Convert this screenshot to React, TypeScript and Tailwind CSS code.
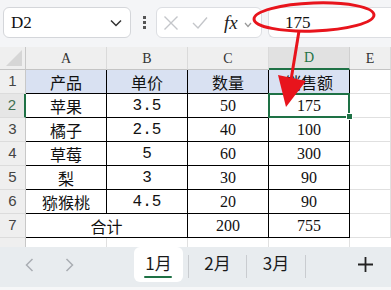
import React from "react";

const SERIF = "font-['Liberation_Serif','Noto_Sans_CJK_SC',serif]";
const CJK = "font-['Noto_Sans_CJK_SC',sans-serif]";
const MONO = "font-['Liberation_Mono',monospace]";

function Toolbar() {
  return (
    <div className="flex h-[47px] items-start bg-[#f4f5f7] pt-[7px]">
      <div className="ml-[3px] flex h-[31px] w-[128px] items-center justify-between rounded-[6px] border border-[#d4d6da] bg-white pl-[7px] pr-[8px]">
        <span className={`${SERIF} text-[17px] leading-none text-[#111]`}>D2</span>
        <svg width="12" height="8" viewBox="0 0 12 8">
          <path d="M1 1.5 L6 6.5 L11 1.5" fill="none" stroke="#333" strokeWidth="1.5" />
        </svg>
      </div>
      <div className="ml-[12px] mr-[10px] flex h-[31px] flex-col items-center justify-center gap-[2px]">
        <div className="h-[3px] w-[3px] bg-[#555]" />
        <div className="h-[3px] w-[3px] bg-[#555]" />
        <div className="h-[3px] w-[3px] bg-[#555]" />
      </div>
      <div className="flex h-[31px] w-[106px] items-center rounded-[6px] border border-[#dcdee2] bg-white pl-[6px]">
        <svg width="16" height="16" viewBox="0 0 16 16">
          <path d="M1.5 1.5 L14.5 14.5 M14.5 1.5 L1.5 14.5" stroke="#c4c6ca" strokeWidth="1.4" fill="none" />
        </svg>
        <svg className="ml-[13px]" width="16" height="14" viewBox="0 0 16 14">
          <path d="M1 7 L6 12 L15 1.5" stroke="#c4c6ca" strokeWidth="1.4" fill="none" />
        </svg>
        <span className={`${SERIF} ml-[16px] text-[19px] italic leading-none text-[#222]`}>fx</span>
        <svg className="ml-[6px] mt-[4px]" width="8" height="6" viewBox="0 0 8 6">
          <path d="M1 1 L4 4.5 L7 1" stroke="#999" strokeWidth="1.2" fill="none" />
        </svg>
      </div>
      <div className="ml-[6px] flex h-[31px] flex-1 items-center rounded-l-[6px] border border-r-0 border-[#dcdee2] bg-white pl-[16px]">
        <span className={`${SERIF} text-[17px] leading-none text-[#111]`}>175</span>
      </div>
    </div>
  );
}

const colHead = `${SERIF} flex items-center justify-center bg-[#efefef] border-r border-b border-r-[#dadada] border-b-[#c4c4c4] text-[14px] text-[#333]`;
const rowHead = "font-['Liberation_Sans',sans-serif] flex items-center justify-center bg-[#efefef] border-r border-b border-r-[#c8c8c8] border-b-[#dcdcdc] text-[15px] text-[#444]";
const cell = "flex items-center justify-center border-r border-b border-black text-[16px] text-[#111]";
const empty = "border-r border-b border-[#e0e0e0] bg-white";

const rows = [
  ["苹果", "3.5", "50", "175"],
  ["橘子", "2.5", "40", "100"],
  ["草莓", "5", "60", "300"],
  ["梨", "3", "30", "90"],
  ["猕猴桃", "4.5", "20", "90"],
];

function Grid() {
  return (
    <div className="grid h-[200px] grid-cols-[26px_81px_81px_81px_81px_1fr] grid-rows-[23px_repeat(7,24px)_9px] overflow-hidden bg-white">
      <div className="relative border-b border-r border-b-[#c4c4c4] border-r-[#c8c8c8] bg-[#efefef]">
        <svg className="absolute bottom-[3px] right-[3px]" width="16" height="16" viewBox="0 0 16 16">
          <path d="M16 0 L16 16 L0 16 Z" fill="#d6d6d6" />
        </svg>
      </div>
      <div className={colHead}>A</div>
      <div className={colHead}>B</div>
      <div className={colHead}>C</div>
      <div className={`${SERIF} flex items-center justify-center border-b-2 border-r border-b-[#1e7145] border-r-[#cfcfcf] bg-[#e1e1e1] text-[14px] text-[#1e7145]`}>D</div>
      <div className={colHead}>E</div>

      <div className={rowHead}>1</div>
      <div className={`${cell} ${CJK} bg-[#d9e1f2]`}>产品</div>
      <div className={`${cell} ${CJK} bg-[#d9e1f2]`}>单价</div>
      <div className={`${cell} ${CJK} bg-[#d9e1f2]`}>数量</div>
      <div className={`${cell} ${CJK} bg-[#d9e1f2]`}>销售额</div>
      <div className={empty} />

      {rows.map((r, i) => (
        <React.Fragment key={i}>
          {i === 0 ? (
            <div className="font-['Liberation_Sans',sans-serif] flex items-center justify-center border-b border-r-2 border-b-[#dcdcdc] border-r-[#1e7145] bg-[#e6e6e6] text-[15px] text-[#3f6f52]">2</div>
          ) : (
            <div className={rowHead}>{i + 2}</div>
          )}
          <div className={`${cell} ${CJK}`}>{r[0]}</div>
          <div className={`${cell} ${MONO} text-[15px]`}>{r[1]}</div>
          <div className={`${cell} ${SERIF}`}>{r[2]}</div>
          {i === 0 ? (
            <div className={`${cell} ${SERIF} relative`}>
              {r[3]}
              <div className="absolute -bottom-[1px] -left-[1px] -right-[1px] -top-[1px] border-2 border-[#1e7145]" />
              <div className="absolute -bottom-[3px] -right-[4px] box-content h-[5px] w-[5px] border border-white bg-[#1e7145]" />
            </div>
          ) : (
            <div className={`${cell} ${SERIF}`}>{r[3]}</div>
          )}
          <div className={empty} />
        </React.Fragment>
      ))}

      <div className={rowHead}>7</div>
      <div className={`${cell} ${CJK} col-span-2`}>合计</div>
      <div className={`${cell} ${SERIF}`}>200</div>
      <div className={`${cell} ${SERIF}`}>755</div>
      <div className={empty} />

      <div className="border-r border-r-[#c8c8c8] bg-[#efefef]" />
      <div className="border-r border-[#e0e0e0]" />
      <div className="border-r border-[#e0e0e0]" />
      <div className="border-r border-[#e0e0e0]" />
      <div className="border-r border-[#e0e0e0]" />
      <div />
    </div>
  );
}

function TabBar() {
  return (
    <div className={`${CJK} flex h-[40px] items-start bg-[#e8ecef]`}>
      <div className="flex h-[35px] w-[134px] items-center">
        <svg className="ml-[25px]" width="9" height="14" viewBox="0 0 9 14">
          <path d="M7.5 1 L1.5 7 L7.5 13" fill="none" stroke="#a9adb2" strokeWidth="1.5" />
        </svg>
        <svg className="ml-[31px]" width="9" height="14" viewBox="0 0 9 14">
          <path d="M1.5 1 L7.5 7 L1.5 13" fill="none" stroke="#a9adb2" strokeWidth="1.5" />
        </svg>
      </div>
      <div className="relative flex h-[35px] w-[49px] items-center justify-center rounded-[6px] bg-white pb-[4px] text-[17px] text-[#1a1a1a]">
        1月
        <div className="absolute bottom-[4px] left-[10px] h-[2px] w-[28px] rounded-full bg-[#1e7145]" />
      </div>
      <div className="ml-[5px] mt-[8px] h-[23px] w-px bg-[#c9ccd0]" />
      <div className="flex h-[35px] w-[57px] items-center justify-center pb-[4px] text-[17px] text-[#1a1a1a]">2月</div>
      <div className="mt-[8px] h-[23px] w-px bg-[#c9ccd0]" />
      <div className="flex h-[35px] w-[58px] items-center justify-center pb-[4px] text-[17px] text-[#1a1a1a]">3月</div>
      <div className="mt-[8px] h-[23px] w-px bg-[#c9ccd0]" />
      <div className="flex h-[35px] flex-1 items-center justify-end pr-[18px]">
        <svg width="15" height="15" viewBox="0 0 15 15">
          <path d="M7.5 0 V15 M0 7.5 H15" stroke="#222" strokeWidth="1.8" />
        </svg>
      </div>
    </div>
  );
}

export default function App() {
  return (
    <div className="relative h-[290px] w-[391px] overflow-hidden bg-white">
      <Toolbar />
      <Grid />
      <TabBar />
      <div className="h-[3px] bg-[#f6f7f8]" />
      <svg className="pointer-events-none absolute left-0 top-0" width="391" height="290" viewBox="0 0 391 290">
        <ellipse cx="314" cy="17" rx="60" ry="14" fill="none" stroke="#e8141c" strokeWidth="3" transform="rotate(-2 314 17)" />
        <line x1="299" y1="31" x2="291" y2="80" stroke="#e8141c" strokeWidth="3" />
        <polygon points="278,75 306,81 286,107" fill="#e8141c" />
      </svg>
    </div>
  );
}
